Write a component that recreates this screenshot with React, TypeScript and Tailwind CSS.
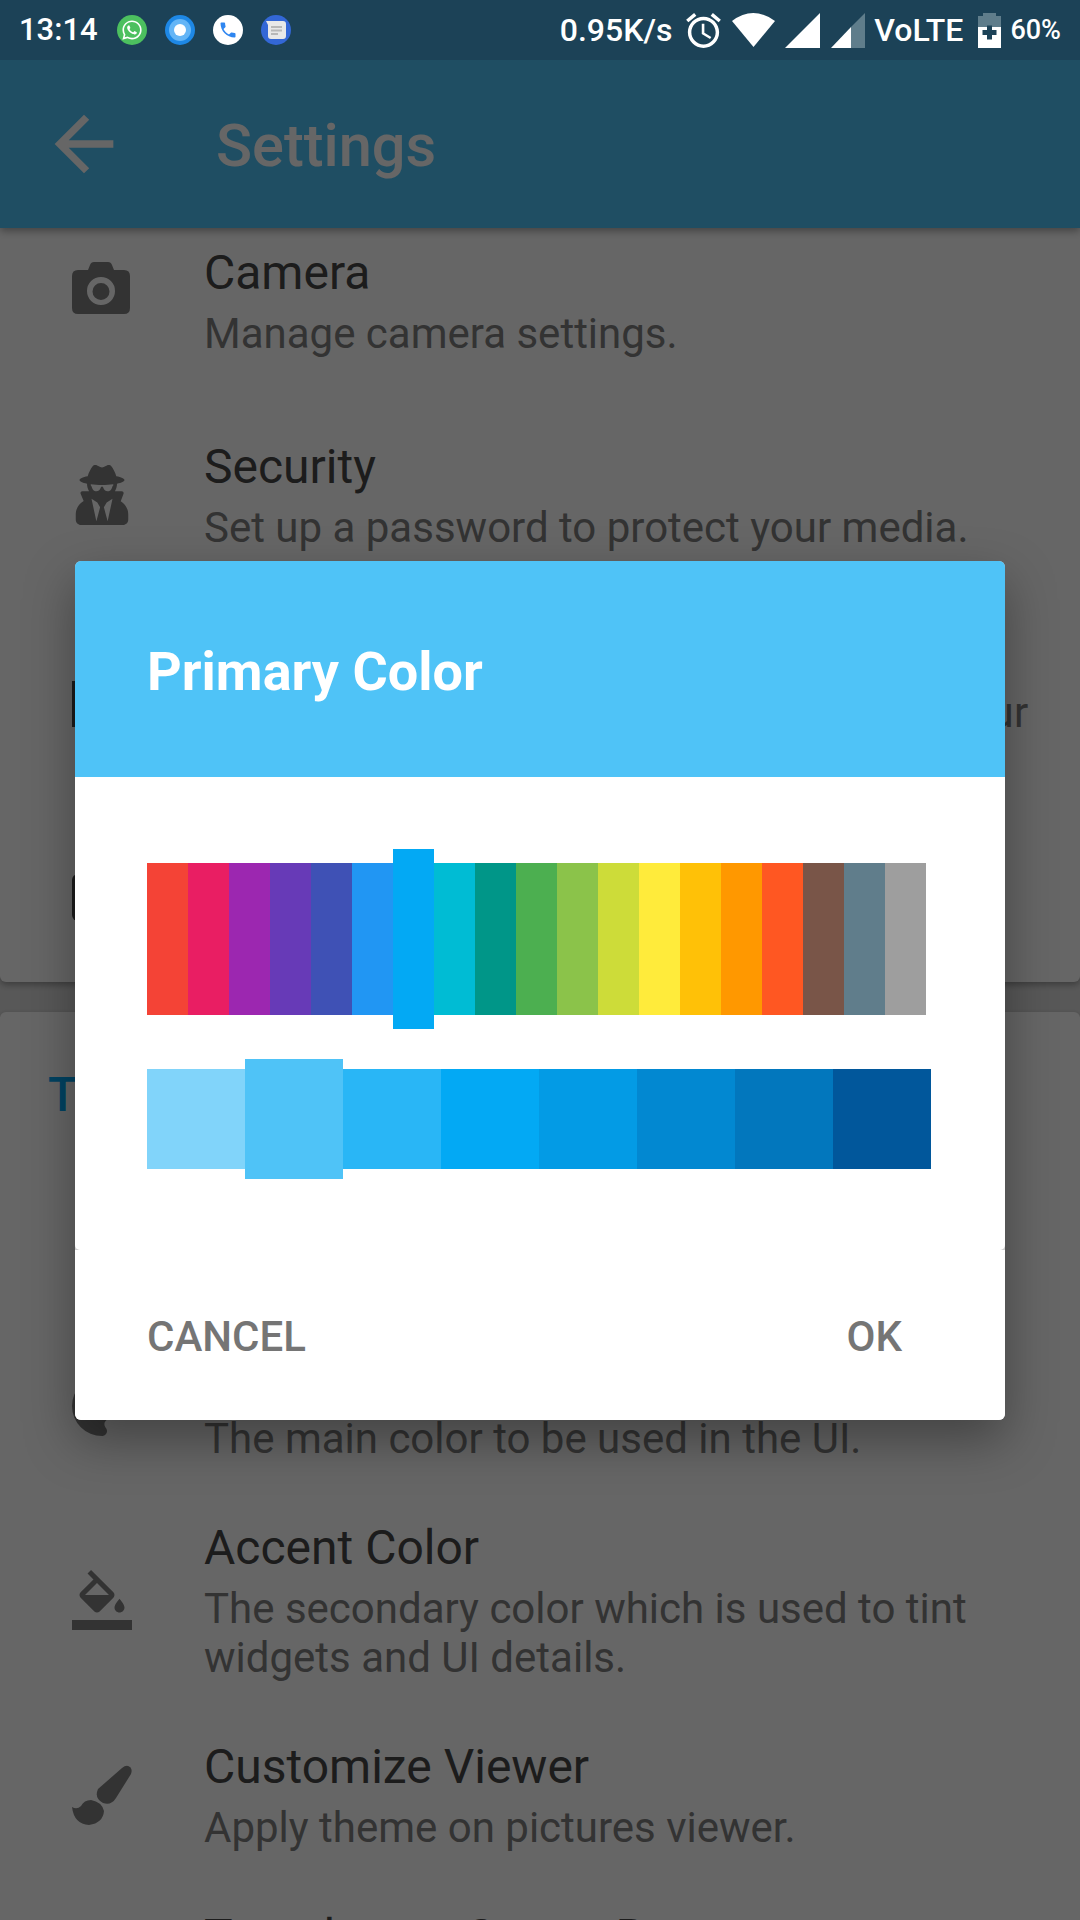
import { FaUserSecret, FaWhatsapp } from 'react-icons/fa'

const hues = ['#F44336', '#E91E63', '#9C27B0', '#673AB7', '#3F51B5', '#2196F3', '#03A9F4', '#00BCD4', '#009688', '#4CAF50', '#8BC34A', '#CDDC39', '#FFEB3B', '#FFC107', '#FF9800', '#FF5722', '#795548', '#607D8B', '#9E9E9E']
const shades = ['#81D4FA', '#4FC3F7', '#29B6F6', '#03A9F4', '#039BE5', '#0288D1', '#0277BD', '#01579B']

function CameraIcon() {
  return (
    <svg width="58" height="52" viewBox="0 0 58 52" className="mb-[26px] text-[#808080]">
      <path fill="currentColor" fillRule="evenodd" d="M6 8h10l2-5q1-3 4-3h14q3 0 4 3l2 5h10q6 0 6 6v32q0 6-6 6H6q-6 0-6-6V14q0-6 6-6Zm23 7a14 14 0 1 0 0 28 14 14 0 0 0 0-28Zm0 6a8.500 8.500 0 1 1 0 17 8.500 8.500 0 0 1 0-17Z" />
    </svg>
  )
}

function FillIcon() {
  return (
    <svg width="60" height="60" viewBox="0 0 24 24" className="text-[#808080]">
      <path fill="currentColor" d="M16.560 8.940L7.620 0 6.210 1.410l2.380 2.380-5.150 5.150c-.590.590-.590 1.540 0 2.120l5.500 5.500c.290.290.680.440 1.060.440s.770-.150 1.060-.440l5.500-5.500c.590-.580.590-1.530 0-2.120zM5.210 10L10 5.210 14.790 10H5.210zM19 11.500s-2 2.170-2 3.500c0 1.100.900 2 2 2s2-.900 2-2c0-1.330-2-3.500-2-3.500z" />
      <path fill="currentColor" d="M0 20h24v4H0z" />
    </svg>
  )
}

function BrushIcon() {
  return (
    <svg width="60" height="60" viewBox="0 0 60 60" className="text-[#808080]">
      <path fill="currentColor" d="M50 3Q55-1 58.500 2.500 60.500 5 59 9L44 33Q39 41 31 38 22 33 26 24Z" />
      <path fill="currentColor" d="M0 42Q5 45 9 41 12 35 19 35 30 37 32 46 31 58 17 60 2 59 0 42Z" />
    </svg>
  )
}

function PaletteIcon() {
  return (
    <svg width="60" height="60" viewBox="3 3 18 18" className="text-[#808080]">
      <path fill="currentColor" d="M12 3a9 9 0 0 0 0 18c.830 0 1.500-.670 1.500-1.500 0-.390-.150-.740-.390-1.010-.230-.260-.380-.610-.380-.990 0-.830.670-1.500 1.500-1.500H16c2.760 0 5-2.240 5-5 0-4.420-4.030-8-9-8Z" />
    </svg>
  )
}

function Row({ icon, title, sub, className }: { icon?: React.ReactNode; title: string; sub: React.ReactNode; className?: string }) {
  return (
    <div className={`flex pl-[72px] ${className ?? ''}`}>
      <div className="flex w-[132px] shrink-0 items-center">{icon}</div>
      <div className="flex flex-col whitespace-nowrap">
        <span className="mb-[7px] text-[48px] leading-[59px] text-[#484848]">{title}</span>
        <span className="text-[42px] leading-[49px] text-[#808080]">{sub}</span>
      </div>
    </div>
  )
}

function StatusBar() {
  return (
    <div className="relative z-20 flex h-[60px] shrink-0 items-center justify-between bg-[#1c4257] pl-[19px] pr-[19px] text-white">
      <div className="flex items-center">
        <span className="w-[98px] text-[31px] font-medium">13:14</span>
        <div className="flex h-[30px] w-[30px] items-center justify-center rounded-full bg-[#4CC05F]">
          <FaWhatsapp className="text-[22px]" />
        </div>
        <div className="ml-[18px] flex h-[30px] w-[30px] items-center justify-center rounded-full bg-[#1E88E5]">
          <div className="flex h-[22px] w-[22px] items-center justify-center rounded-full bg-[#64B5F6]">
            <div className="h-[12px] w-[12px] rounded-full bg-white" />
          </div>
        </div>
        <div className="ml-[18px] flex h-[30px] w-[30px] items-center justify-center rounded-full bg-white">
          <svg width="20" height="20" viewBox="0 0 24 24">
            <path fill="#2F86F0" d="M6.620 10.790c1.440 2.830 3.760 5.140 6.590 6.590l2.200-2.200c.270-.270.670-.360 1.020-.240 1.120.370 2.330.570 3.570.570.550 0 1 .450 1 1V20c0 .550-.450 1-1 1C10.610 21 3 13.390 3 4c0-.550.450-1 1-1h3.500c.550 0 1 .450 1 1 0 1.250.200 2.450.570 3.570.110.350.030.740-.250 1.020l-2.200 2.200z" />
          </svg>
        </div>
        <div className="ml-[18px] flex h-[30px] w-[30px] items-center justify-center rounded-full bg-[#3367D6]">
          <svg width="20" height="18" viewBox="0 0 20 18">
            <path fill="#E8E8E8" d="M0 0h17q3 0 3 3v12q0 3-3 3H5q-3 0-3-3V4Z" />
            <path fill="#B8B8B8" d="M5 5h11v2H5zM5 8.500h11v2H5zM5 12h7v2H5z" />
          </svg>
        </div>
      </div>
      <div className="flex items-center">
        <span className="text-[32px] font-medium">0.95K/s</span>
        <svg width="35" height="35" viewBox="2 1.860 20 20.140" className="ml-[14px]">
          <path fill="#fff" d="M22 5.720l-4.600-3.860-1.290 1.530 4.600 3.860L22 5.720zM7.880 3.390L6.600 1.860 2 5.710l1.290 1.530 4.590-3.850zM12.500 8H11v6l4.750 2.850.750-1.230-4-2.370V8zM12 4c-4.970 0-9 4.030-9 9s4.030 9 9 9 9-4.030 9-9-4.030-9-9-9zm0 16c-3.870 0-7-3.130-7-7s3.130-7 7-7 7 3.130 7 7-3.130 7-7 7z" />
        </svg>
        <svg width="43" height="34" viewBox="0 0 43 34" className="ml-[11px]">
          <path fill="#fff" d="M0 8Q21-8 43 8L21.500 34Z" />
        </svg>
        <svg width="35" height="35" viewBox="0 0 35 35" className="ml-[10px]">
          <path fill="#fff" d="M35 0V35H0Z" />
        </svg>
        <svg width="34" height="35" viewBox="0 0 34 35" className="ml-[11px]">
          <path fill="#5F7D8B" d="M20 14 34 0V35H20Z" />
          <path fill="#fff" d="M0 35 20 14V35Z" />
        </svg>
        <span className="ml-[9px] text-[32px] font-medium">VoLTE</span>
        <svg width="23" height="35" viewBox="0 0 23 35" className="ml-[15px]">
          <path fill="#5F7D8B" d="M5 0h13v3h5v11H0V3h5Z" />
          <path fill="#fff" d="M0 14h23v21H0Z" />
          <path fill="#1c4257" d="M9 12.500h5V17h4.500v5H14v4.500H9V22H4.500v-5H9Z" />
        </svg>
        <span className="ml-[9px] text-[27px] font-medium">60%</span>
      </div>
    </div>
  )
}

export default function App() {
  return (
    <div className="relative flex h-[1920px] w-[1080px] flex-col overflow-hidden bg-[#dcdcdc] font-['Roboto',sans-serif]">
      <StatusBar />
      <div className="relative z-[5] flex h-[168px] shrink-0 items-center bg-[#4FC3F7] pl-[40px] text-white shadow-[0_3px_8px_rgba(0,0,0,0.35)]">
        <svg width="88" height="88" viewBox="0 0 24 24">
          <path fill="currentColor" d="M20 11H7.830l5.590-5.590L12 4l-8 8 8 8 1.410-1.410L7.830 13H20v-2z" />
        </svg>
        <span className="ml-[88px] pt-[5px] text-[59.500px] font-medium">Settings</span>
      </div>

      <div className="h-[754px] shrink-0 overflow-hidden rounded-b-[6px] bg-white pt-[15px] shadow-[0_3px_6px_rgba(0,0,0,0.3)]">
        <Row icon={<CameraIcon />} title="Camera" sub="Manage camera settings." className="mb-[79px]" />
        <Row icon={<FaUserSecret className="text-[60px] text-[#808080]" />} title="Security" sub="Set up a password to protect your media." className="mb-[70px]" />
        <Row
          icon={<div className="h-[46px] w-[40px] bg-[#484848]" />}
          title="Map Provider"
          sub={<span className="tracking-[0.25px]">Choose a map provider used to display your<br />media on the map.</span>}
          className="mb-[54px]"
        />
        <Row icon={<div className="h-[47px] w-[40px] rounded-[6px] bg-[#484848]" />} title="Albums" sub="Choose how to sort albums." />
      </div>

      <div className="mt-[30px] min-h-0 flex-1 overflow-hidden rounded-t-[6px] bg-white shadow-[0_1px_4px_rgba(0,0,0,0.2)]">
        <div className="pl-[48px] pt-[53px] text-[48px] font-medium leading-[59px] text-[#03A9F4]">Theme</div>
        <Row title="Base Theme" sub="Choose a light or dark theme." className="mb-[55px] mt-[54px]" />
        <Row icon={<PaletteIcon />} title="Primary Color" sub="The main color to be used in the UI." className="mb-[55px]" />
        <Row icon={<FillIcon />} title="Accent Color" sub={<>The secondary color which is used to tint<br />widgets and UI details.</>} className="mb-[55px]" />
        <Row icon={<BrushIcon />} title="Customize Viewer" sub="Apply theme on pictures viewer." className="mb-[55px]" />
        <Row title="Translucent Status Bar" sub="Apply transparency to the status bar." />
      </div>

      {/* dim behind the dialog, status bar stays above it */}
      <div className="absolute inset-x-0 bottom-0 top-[60px] z-10 flex items-center justify-center bg-black/60">
        <div className="flex h-[859px] w-[930px] flex-col overflow-hidden rounded-[6px] bg-[#d0d0d0] shadow-[0_20px_50px_rgba(0,0,0,0.35)]">
          <div className="flex h-[216px] shrink-0 items-center bg-[#4FC3F7] pl-[72px] pt-[5px] text-[54px] font-bold text-white">Primary Color</div>
          <div className="flex h-[473px] shrink-0 flex-col rounded-b-[5px] bg-white pl-[72px] pt-[72px]">
            <div className="flex h-[180px] items-center">
              {hues.map((c, i) => (
                <div key={c} className={`w-[41px] ${i === 6 ? 'h-[180px]' : 'h-[152px]'}`} style={{ backgroundColor: c }} />
              ))}
            </div>
            <div className="mt-[30px] flex h-[120px] items-center">
              {shades.map((c, i) => (
                <div key={c} className={`w-[98px] ${i === 1 ? 'h-[120px]' : 'h-[100px]'}`} style={{ backgroundColor: c }} />
              ))}
            </div>
          </div>
          <div className="flex flex-1 items-center justify-between bg-white pl-[72px] pr-[103px] pt-[3px] text-[42px] font-medium text-[#757575]">
            <span>CANCEL</span>
            <span>OK</span>
          </div>
        </div>
      </div>
    </div>
  )
}
